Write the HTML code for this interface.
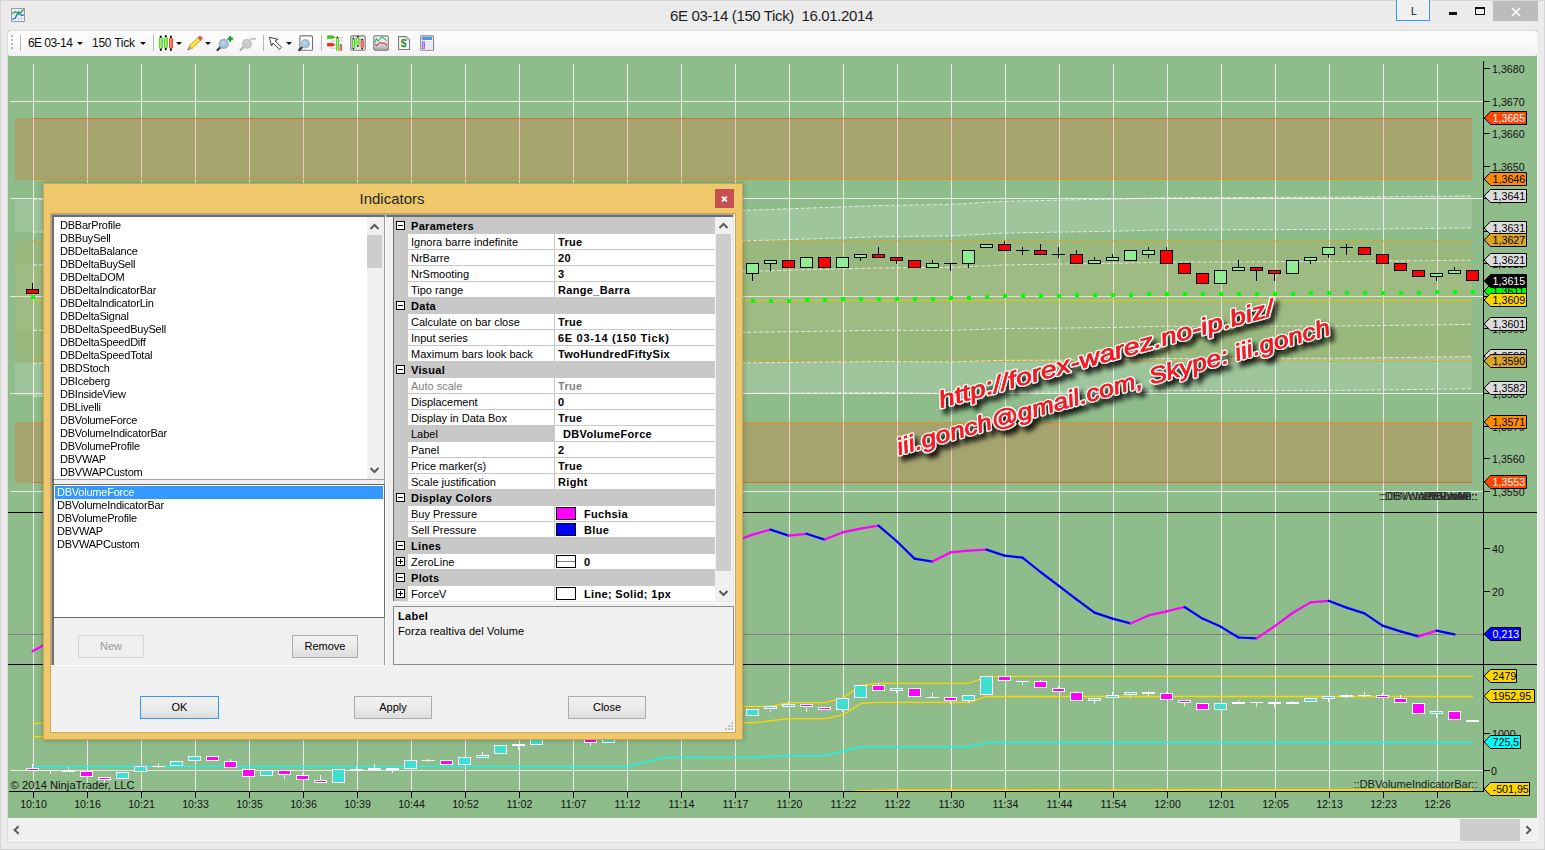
<!DOCTYPE html>
<html lang="en"><head><meta charset="utf-8"><title>6E 03-14 (150 Tick) 16.01.2014</title>
<style>
html,body{margin:0;padding:0}
body{width:1545px;height:850px;position:relative;overflow:hidden;background:#ebebeb;font-family:"Liberation Sans",Arial,sans-serif;font-size:11px;color:#000}
.abs{position:absolute}
#title{left:0;top:0;width:1545px;height:31px;background:#ebebeb}
#ttext{left:-1px;width:1545px;top:7px;text-align:center;font-size:15px;letter-spacing:-0.37px;color:#1e1e1e;line-height:18px;white-space:pre}
#tb{left:8px;top:31px;width:1528.5px;height:25px;background:linear-gradient(#fdfdfd,#fbfbfb 40%,#f1f1f1);border-radius:2px}
.tbt{top:36px;font-size:12px;line-height:14px;color:#111;letter-spacing:-0.2px}
.sep{top:35px;width:1px;height:16px;background:#b9b9b9}
.dd{width:0;height:0;border-left:3px solid transparent;border-right:3px solid transparent;border-top:3.5px solid #111;top:41.7px}
#sb{left:8px;top:818px;width:1529px;height:24px;background:#f0f0f0}
#dlg{left:43px;top:183px;width:700px;height:557px;background:#efc86b;box-sizing:border-box;border:1px solid #cfa650;box-shadow:0 0 5px rgba(0,0,0,0.3)}
#dtitle{left:-1px;top:6px;width:698px;text-align:center;font-size:15px;color:#262626;line-height:18px;letter-spacing:0}
#dclose{left:671px;top:5px;width:19px;height:19px;background:#c75050;color:#fff}
#client{left:7px;top:30px;width:684px;height:518px;background:#f0f0f0;outline:1px solid #cfa650;box-shadow:inset -1px -1px 0 #fbfbfb}
.lb{background:#fff;border:1px solid #828790;box-sizing:border-box;overflow:hidden}
.li{position:absolute;left:6px;height:13px;line-height:13px;white-space:pre;letter-spacing:-0.22px;font-size:11px;transform:scaleY(1.07);transform-origin:0 10px}
.btn{box-sizing:border-box;border:1px solid #acacac;background:linear-gradient(#f2f2f2,#ebebeb 50%,#dddddd);text-align:center;font-size:11px;line-height:21px;height:23px;font-size:11px}
.sbt{background:#f0f0f0}
.thumb{background:#cdcdcd}
.pg{left:386px;top:31px;width:341px;height:388px;background:#c8c8c8;border:1px solid #828790;box-sizing:border-box;overflow:hidden}
.row{position:absolute;left:0;width:321px;height:16px}
.cat{font-weight:bold;left:17px;top:0;line-height:16.5px;position:absolute;white-space:pre;letter-spacing:0.3px}
.lab{position:absolute;left:14px;top:0;width:146px;height:15px;background:#fff;line-height:16.5px;white-space:pre;text-indent:3px;letter-spacing:0}
.val{position:absolute;left:161px;top:0;width:160px;height:15px;background:#fff;line-height:16.5px;font-weight:bold;white-space:pre;text-indent:3px;letter-spacing:0.33px}
.box{position:absolute;left:2px;top:3px;width:7px;height:7px;border:1px solid #000;background:#fff}
.box i{position:absolute;left:1px;top:3px;width:5px;height:1px;background:#000}
.box b{position:absolute;left:3px;top:1px;width:1px;height:5px;background:#000}
.sw{position:absolute;left:1px;top:1px;width:18px;height:11px;border:1px solid #000}
</style></head><body>
<div id="title" class="abs"></div>
<div class="abs" style="left:0;top:0;width:1545px;height:1px;background:#d6d6d6"></div>
<div class="abs" style="left:0;top:0;width:1px;height:850px;background:#d6d6d6"></div>
<div class="abs" style="left:1544px;top:0;width:1px;height:850px;background:#d6d6d6"></div>
<div class="abs" style="left:0;top:849px;width:1545px;height:1px;background:#d0d0d0"></div>
<svg class="abs" style="left:11px;top:8px" width="14" height="14" viewBox="0 0 14 14"><rect x="0.5" y="0.5" width="13" height="13" fill="#f6f4fc" stroke="#9a9cb8" stroke-width="1"/><path d="M1 4h12M1 7.2h12M1 10.4h12M4 1v12M7.2 1v12M10.4 1v12" stroke="#cfcde6" stroke-width="0.7"/><polyline points="1.3,11.5 4.3,9.9 5.8,7 7.5,3.7 10.5,7.5 13.2,6.7" fill="none" stroke="#1460d8" stroke-width="1.15" stroke-linejoin="round"/><polyline points="1.1,5.7 4.6,3.6 7.5,6.6 12.8,1.5" fill="none" stroke="#22b014" stroke-width="1.15" stroke-linejoin="round"/></svg>
<div id="ttext" class="abs">6E 03-14 (150 Tick)  16.01.2014</div>
<div class="abs" style="left:1396px;top:0;width:34px;height:21px;box-sizing:border-box;border:1px solid #3b97ff;border-top:none;background:#f0f0f0;text-align:center;text-indent:2px;font-size:10.5px;line-height:22px;color:#111">L</div>
<div class="abs" style="left:1449px;top:12px;width:8px;height:3px;background:#111"></div>
<div class="abs" style="left:1475px;top:7px;width:10px;height:8px;box-sizing:border-box;border:1px solid #111;border-top-width:2px"></div>
<div class="abs" style="left:1493px;top:1px;width:45px;height:20px;background:#bcbcbc"></div>
<svg class="abs" style="left:1511px;top:7px" width="10" height="10" viewBox="0 0 10 10"><path d="M1 1l8 8M9 1l-8 8" stroke="#fff" stroke-width="1.6"/></svg>
<svg width="1545" height="850" viewBox="0 0 1545 850" style="position:absolute;left:0;top:0" font-family="'Liberation Sans', Arial, sans-serif" font-size="10.67px">
<defs><filter id="ws" x="-5%" y="-30%" width="110%" height="170%"><feGaussianBlur in="SourceAlpha" stdDeviation="2.4"/><feOffset dx="4" dy="5" result="b"/><feComponentTransfer><feFuncA type="linear" slope="0.85"/></feComponentTransfer><feMerge><feMergeNode/><feMergeNode in="SourceGraphic"/></feMerge></filter></defs>
<rect x="8" y="31" width="1529" height="787" fill="#8fbc8b"/>
<g stroke="#e9e9e4" stroke-width="1" shape-rendering="crispEdges">
<line x1="33.5" y1="64" x2="33.5" y2="791"/>
<line x1="87.5" y1="64" x2="87.5" y2="791"/>
<line x1="141.5" y1="64" x2="141.5" y2="791"/>
<line x1="195.5" y1="64" x2="195.5" y2="791"/>
<line x1="249.5" y1="64" x2="249.5" y2="791"/>
<line x1="303.5" y1="64" x2="303.5" y2="791"/>
<line x1="357.5" y1="64" x2="357.5" y2="791"/>
<line x1="411.5" y1="64" x2="411.5" y2="791"/>
<line x1="465.5" y1="64" x2="465.5" y2="791"/>
<line x1="519.5" y1="64" x2="519.5" y2="791"/>
<line x1="573.5" y1="64" x2="573.5" y2="791"/>
<line x1="627.5" y1="64" x2="627.5" y2="791"/>
<line x1="681.5" y1="64" x2="681.5" y2="791"/>
<line x1="735.5" y1="64" x2="735.5" y2="791"/>
<line x1="789.5" y1="64" x2="789.5" y2="791"/>
<line x1="843.5" y1="64" x2="843.5" y2="791"/>
<line x1="897.5" y1="64" x2="897.5" y2="791"/>
<line x1="951.5" y1="64" x2="951.5" y2="791"/>
<line x1="1005.5" y1="64" x2="1005.5" y2="791"/>
<line x1="1059.5" y1="64" x2="1059.5" y2="791"/>
<line x1="1113.5" y1="64" x2="1113.5" y2="791"/>
<line x1="1167.5" y1="64" x2="1167.5" y2="791"/>
<line x1="1221.5" y1="64" x2="1221.5" y2="791"/>
<line x1="1275.5" y1="64" x2="1275.5" y2="791"/>
<line x1="1329.5" y1="64" x2="1329.5" y2="791"/>
<line x1="1383.5" y1="64" x2="1383.5" y2="791"/>
<line x1="1437.5" y1="64" x2="1437.5" y2="791"/>
<line x1="10" y1="101.5" x2="1483" y2="101.5"/>
<line x1="10" y1="198.5" x2="1483" y2="198.5"/>
<line x1="10" y1="296.5" x2="1483" y2="296.5"/>
<line x1="10" y1="393.5" x2="1483" y2="393.5"/>
<line x1="10" y1="491.5" x2="1483" y2="491.5"/>
<line x1="10" y1="770.5" x2="1483" y2="770.5"/>
</g>
<rect x="15" y="118" width="1457" height="62" fill="#ff4500" fill-opacity="0.2"/>
<rect x="15" y="422" width="1457" height="61" fill="#ff4500" fill-opacity="0.2"/>
<rect x="15" y="240" width="1457" height="122" fill="#daa520" fill-opacity="0.13"/>
<polygon points="15.0,199.2 33.0,199.2 745.0,210.4 880.0,205.5 950.0,204.4 1005.0,201.3 1060.0,200.1 1120.0,199.0 1160.0,197.8 1340.0,197.2 1472.0,195.9 1472.0,228.0 1340.0,229.4 1160.0,229.9 1120.0,231.1 1060.0,232.1 1005.0,233.1 950.0,235.9 880.0,236.7 745.0,240.9 33.0,232.0 15.0,232.0" fill="rgba(255,255,255,0.14)"/>
<polygon points="15.0,363.2 33.0,363.2 745.0,362.9 880.0,361.5 950.0,361.9 1005.0,360.3 1060.0,360.1 1120.0,359.5 1160.0,358.5 1340.0,358.2 1472.0,356.6 1472.0,388.8 1340.0,390.4 1160.0,390.6 1120.0,391.6 1060.0,392.1 1005.0,392.1 950.0,393.4 880.0,392.7 745.0,393.4 33.0,396.0 15.0,396.0" fill="rgba(255,255,255,0.14)"/>
<polygon points="15.0,264.8 33.0,264.8 745.0,271.4 880.0,267.9 950.0,267.4 1005.0,264.9 1060.0,264.1 1120.0,263.2 1160.0,262.1 1340.0,261.6 1472.0,260.2 1472.0,324.4 1340.0,326.0 1160.0,326.3 1120.0,327.4 1060.0,328.1 1005.0,328.5 950.0,330.4 880.0,330.3 745.0,332.4 33.0,330.4 15.0,330.4" fill="rgba(255,255,255,0.05)"/>
<g stroke-width="1" shape-rendering="crispEdges">
<line x1="33" x2="1472" y1="118.5" y2="118.5" stroke="#ff4500" stroke-opacity="0.55"/>
<line x1="33" x2="1472" y1="179.5" y2="179.5" stroke="#ff8c00" stroke-opacity="0.7"/>
<line x1="33" x2="1472" y1="422.5" y2="422.5" stroke="#ff8c00" stroke-opacity="0.7"/>
<line x1="33" x2="1472" y1="482.5" y2="482.5" stroke="#ff4500" stroke-opacity="0.55"/>
<line x1="33" x2="1472" y1="240.5" y2="240.5" stroke="#daa520" stroke-opacity="0.75"/>
<line x1="33" x2="1472" y1="361.5" y2="361.5" stroke="#daa520" stroke-opacity="0.75"/>
<line x1="33" x2="1472" y1="300.5" y2="300.5" stroke="#e6d200" stroke-opacity="0.75"/>
</g>
<g fill="none" stroke="#f4f4f4" stroke-opacity="0.8" stroke-width="1" stroke-dasharray="4 2">
<polyline points="33.0,199.2 745.0,210.4 880.0,205.5 950.0,204.4 1005.0,201.3 1060.0,200.1 1120.0,199.0 1160.0,197.8 1340.0,197.2 1472.0,195.9"/>
<polyline points="33.0,232.0 745.0,240.9 880.0,236.7 950.0,235.9 1005.0,233.1 1060.0,232.1 1120.0,231.1 1160.0,229.9 1340.0,229.4 1472.0,228.0"/>
<polyline points="33.0,264.8 745.0,271.4 880.0,267.9 950.0,267.4 1005.0,264.9 1060.0,264.1 1120.0,263.2 1160.0,262.1 1340.0,261.6 1472.0,260.2"/>
<polyline points="33.0,330.4 745.0,332.4 880.0,330.3 950.0,330.4 1005.0,328.5 1060.0,328.1 1120.0,327.4 1160.0,326.3 1340.0,326.0 1472.0,324.4"/>
<polyline points="33.0,363.2 745.0,362.9 880.0,361.5 950.0,361.9 1005.0,360.3 1060.0,360.1 1120.0,359.5 1160.0,358.5 1340.0,358.2 1472.0,356.6"/>
<polyline points="33.0,396.0 745.0,393.4 880.0,392.7 950.0,393.4 1005.0,392.1 1060.0,392.1 1120.0,391.6 1160.0,390.6 1340.0,390.4 1472.0,388.8"/>
</g>
<g fill="#00ff00" shape-rendering="crispEdges">
<rect x="31" y="295" width="4" height="4"/>
<rect x="49" y="295" width="4" height="4"/>
<rect x="67" y="295" width="4" height="4"/>
<rect x="85" y="296" width="4" height="4"/>
<rect x="103" y="296" width="4" height="4"/>
<rect x="121" y="296" width="4" height="4"/>
<rect x="139" y="296" width="4" height="4"/>
<rect x="157" y="296" width="4" height="4"/>
<rect x="175" y="296" width="4" height="4"/>
<rect x="193" y="296" width="4" height="4"/>
<rect x="211" y="296" width="4" height="4"/>
<rect x="229" y="296" width="4" height="4"/>
<rect x="247" y="297" width="4" height="4"/>
<rect x="265" y="297" width="4" height="4"/>
<rect x="283" y="297" width="4" height="4"/>
<rect x="301" y="297" width="4" height="4"/>
<rect x="319" y="297" width="4" height="4"/>
<rect x="337" y="297" width="4" height="4"/>
<rect x="355" y="297" width="4" height="4"/>
<rect x="373" y="297" width="4" height="4"/>
<rect x="391" y="297" width="4" height="4"/>
<rect x="409" y="297" width="4" height="4"/>
<rect x="427" y="298" width="4" height="4"/>
<rect x="445" y="298" width="4" height="4"/>
<rect x="463" y="298" width="4" height="4"/>
<rect x="481" y="298" width="4" height="4"/>
<rect x="499" y="298" width="4" height="4"/>
<rect x="517" y="298" width="4" height="4"/>
<rect x="535" y="298" width="4" height="4"/>
<rect x="553" y="298" width="4" height="4"/>
<rect x="571" y="298" width="4" height="4"/>
<rect x="589" y="299" width="4" height="4"/>
<rect x="607" y="299" width="4" height="4"/>
<rect x="625" y="299" width="4" height="4"/>
<rect x="643" y="299" width="4" height="4"/>
<rect x="661" y="299" width="4" height="4"/>
<rect x="679" y="299" width="4" height="4"/>
<rect x="697" y="299" width="4" height="4"/>
<rect x="715" y="299" width="4" height="4"/>
<rect x="733" y="299" width="4" height="4"/>
<rect x="751" y="299" width="4" height="4"/>
<rect x="769" y="299" width="4" height="4"/>
<rect x="787" y="299" width="4" height="4"/>
<rect x="805" y="298" width="4" height="4"/>
<rect x="823" y="298" width="4" height="4"/>
<rect x="841" y="297" width="4" height="4"/>
<rect x="859" y="297" width="4" height="4"/>
<rect x="877" y="297" width="4" height="4"/>
<rect x="895" y="297" width="4" height="4"/>
<rect x="913" y="297" width="4" height="4"/>
<rect x="931" y="297" width="4" height="4"/>
<rect x="949" y="296" width="4" height="4"/>
<rect x="967" y="296" width="4" height="4"/>
<rect x="985" y="295" width="4" height="4"/>
<rect x="1003" y="294" width="4" height="4"/>
<rect x="1021" y="294" width="4" height="4"/>
<rect x="1039" y="294" width="4" height="4"/>
<rect x="1057" y="294" width="4" height="4"/>
<rect x="1075" y="293" width="4" height="4"/>
<rect x="1093" y="293" width="4" height="4"/>
<rect x="1111" y="293" width="4" height="4"/>
<rect x="1129" y="293" width="4" height="4"/>
<rect x="1147" y="292" width="4" height="4"/>
<rect x="1165" y="292" width="4" height="4"/>
<rect x="1183" y="292" width="4" height="4"/>
<rect x="1201" y="292" width="4" height="4"/>
<rect x="1219" y="292" width="4" height="4"/>
<rect x="1237" y="292" width="4" height="4"/>
<rect x="1255" y="292" width="4" height="4"/>
<rect x="1273" y="292" width="4" height="4"/>
<rect x="1291" y="292" width="4" height="4"/>
<rect x="1309" y="291" width="4" height="4"/>
<rect x="1327" y="291" width="4" height="4"/>
<rect x="1345" y="291" width="4" height="4"/>
<rect x="1363" y="291" width="4" height="4"/>
<rect x="1381" y="291" width="4" height="4"/>
<rect x="1399" y="291" width="4" height="4"/>
<rect x="1417" y="291" width="4" height="4"/>
<rect x="1435" y="290" width="4" height="4"/>
<rect x="1453" y="290" width="4" height="4"/>
<rect x="1471" y="290" width="4" height="4"/>
</g>
<g stroke="#000" stroke-width="1" shape-rendering="crispEdges">
<line x1="32.5" x2="32.5" y1="283.0" y2="289.5"/>
<rect x="26.5" y="289.5" width="12" height="4.0" fill="#ff0000"/>
<line x1="752.5" x2="752.5" y1="273.5" y2="281.0"/>
<rect x="746.5" y="263.5" width="12" height="10.0" fill="#90ee90"/>
<line x1="770.5" x2="770.5" y1="263.5" y2="271.0"/>
<rect x="764.5" y="260.5" width="12" height="3.0" fill="#90ee90"/>
<rect x="782.5" y="260.5" width="12" height="7.0" fill="#ff0000"/>
<rect x="800.5" y="257.5" width="12" height="10.0" fill="#90ee90"/>
<rect x="818.5" y="257.5" width="12" height="10.0" fill="#ff0000"/>
<rect x="836.5" y="257.5" width="12" height="10.0" fill="#90ee90"/>
<line x1="860.5" x2="860.5" y1="257.5" y2="261.0"/>
<rect x="854.5" y="254.5" width="12" height="3.0" fill="#90ee90"/>
<line x1="878.5" x2="878.5" y1="247.0" y2="254.5"/>
<rect x="872.5" y="254.5" width="12" height="3.0" fill="#ff0000"/>
<line x1="896.5" x2="896.5" y1="260.5" y2="264.0"/>
<rect x="890.5" y="257.5" width="12" height="3.0" fill="#ff0000"/>
<rect x="908.5" y="260.5" width="12" height="7.0" fill="#ff0000"/>
<line x1="932.5" x2="932.5" y1="260.0" y2="263.5"/>
<rect x="926.5" y="263.5" width="12" height="4.0" fill="#90ee90"/>
<line x1="950.5" x2="950.5" y1="263.5" y2="271.0"/>
<line x1="944.0" x2="957.0" y1="263.5" y2="263.5"/>
<line x1="968.5" x2="968.5" y1="263.5" y2="268.0"/>
<rect x="962.5" y="250.5" width="12" height="13.0" fill="#90ee90"/>
<rect x="980.5" y="244.5" width="12" height="3.0" fill="#90ee90"/>
<line x1="1004.5" x2="1004.5" y1="241.0" y2="244.5"/>
<rect x="998.5" y="244.5" width="12" height="6.0" fill="#ff0000"/>
<line x1="1022.5" x2="1022.5" y1="247.0" y2="250.5"/>
<line x1="1022.5" x2="1022.5" y1="250.5" y2="255.0"/>
<line x1="1016.0" x2="1029.0" y1="250.5" y2="250.5"/>
<line x1="1040.5" x2="1040.5" y1="244.0" y2="250.5"/>
<rect x="1034.5" y="250.5" width="12" height="4.0" fill="#ff0000"/>
<line x1="1058.5" x2="1058.5" y1="247.0" y2="254.5"/>
<line x1="1058.5" x2="1058.5" y1="254.5" y2="258.0"/>
<line x1="1052.0" x2="1065.0" y1="254.5" y2="254.5"/>
<line x1="1076.5" x2="1076.5" y1="250.0" y2="254.5"/>
<rect x="1070.5" y="254.5" width="12" height="9.0" fill="#ff0000"/>
<line x1="1094.5" x2="1094.5" y1="257.0" y2="260.5"/>
<rect x="1088.5" y="260.5" width="12" height="3.0" fill="#90ee90"/>
<line x1="1112.5" x2="1112.5" y1="254.0" y2="257.5"/>
<rect x="1106.5" y="257.5" width="12" height="3.0" fill="#90ee90"/>
<rect x="1124.5" y="250.5" width="12" height="10.0" fill="#90ee90"/>
<line x1="1148.5" x2="1148.5" y1="247.0" y2="250.5"/>
<line x1="1148.5" x2="1148.5" y1="254.5" y2="258.0"/>
<rect x="1142.5" y="250.5" width="12" height="4.0" fill="#90ee90"/>
<line x1="1166.5" x2="1166.5" y1="247.0" y2="250.5"/>
<rect x="1160.5" y="250.5" width="12" height="13.0" fill="#ff0000"/>
<rect x="1178.5" y="263.5" width="12" height="10.0" fill="#ff0000"/>
<rect x="1196.5" y="273.5" width="12" height="10.0" fill="#ff0000"/>
<rect x="1214.5" y="270.5" width="12" height="13.0" fill="#90ee90"/>
<line x1="1238.5" x2="1238.5" y1="260.0" y2="267.5"/>
<rect x="1232.5" y="267.5" width="12" height="3.0" fill="#90ee90"/>
<line x1="1256.5" x2="1256.5" y1="270.5" y2="281.0"/>
<rect x="1250.5" y="267.5" width="12" height="3.0" fill="#ff0000"/>
<line x1="1274.5" x2="1274.5" y1="273.5" y2="281.0"/>
<rect x="1268.5" y="270.5" width="12" height="3.0" fill="#ff0000"/>
<rect x="1286.5" y="260.5" width="12" height="13.0" fill="#90ee90"/>
<line x1="1310.5" x2="1310.5" y1="260.5" y2="264.0"/>
<rect x="1304.5" y="257.5" width="12" height="3.0" fill="#90ee90"/>
<line x1="1328.5" x2="1328.5" y1="254.5" y2="258.0"/>
<rect x="1322.5" y="247.5" width="12" height="7.0" fill="#90ee90"/>
<line x1="1346.5" x2="1346.5" y1="244.0" y2="247.5"/>
<line x1="1346.5" x2="1346.5" y1="247.5" y2="255.0"/>
<line x1="1340.0" x2="1353.0" y1="247.5" y2="247.5"/>
<rect x="1358.5" y="247.5" width="12" height="7.0" fill="#ff0000"/>
<rect x="1376.5" y="254.5" width="12" height="9.0" fill="#ff0000"/>
<rect x="1394.5" y="263.5" width="12" height="7.0" fill="#ff0000"/>
<rect x="1412.5" y="270.5" width="12" height="6.0" fill="#ff0000"/>
<line x1="1436.5" x2="1436.5" y1="276.5" y2="281.0"/>
<rect x="1430.5" y="273.5" width="12" height="3.0" fill="#90ee90"/>
<line x1="1454.5" x2="1454.5" y1="267.0" y2="270.5"/>
<rect x="1448.5" y="270.5" width="12" height="3.0" fill="#90ee90"/>
<rect x="1466.5" y="270.5" width="12" height="10.0" fill="#ff0000"/>
</g>
<g fill="#2a2a2a" text-anchor="end" font-size="11.2px">
<text x="1477.5" y="499.5">::DBVolumeProfile::</text>
<text x="1477.5" y="499.5">::DBVWAP::</text>
<text x="1477.5" y="499.5">::DBVWAPCustom::</text>
<text x="1477.5" y="499.5">::DBLivelli::</text>
</g>
<g filter="url(#ws)" font-family="'Liberation Sans', sans-serif" font-style="italic" font-size="23px" stroke-linejoin="round">
<text transform="translate(941,408) rotate(-15.6)" textLength="347" lengthAdjust="spacingAndGlyphs" fill="#fff" stroke="#fff" stroke-width="3.1">http://forex-warez.no-ip.biz/</text>
<text transform="translate(941,408) rotate(-15.6)" textLength="347" lengthAdjust="spacingAndGlyphs" fill="#ee1c24" stroke="#ee1c24" stroke-width="0.8">http://forex-warez.no-ip.biz/</text>
<text transform="translate(899,455) rotate(-15.6)" textLength="449" lengthAdjust="spacingAndGlyphs" fill="#fff" stroke="#fff" stroke-width="3.1">iii.gonch@gmail.com, Skype: iii.gonch</text>
<text transform="translate(899,455) rotate(-15.6)" textLength="449" lengthAdjust="spacingAndGlyphs" fill="#ee1c24" stroke="#ee1c24" stroke-width="0.8">iii.gonch@gmail.com, Skype: iii.gonch</text>
</g>
<line x1="8" x2="1483" y1="634.5" y2="634.5" stroke="#808080" stroke-width="1" shape-rendering="crispEdges"/>
<line x1="32.5" y1="651.3" x2="50.5" y2="641.5" stroke="#ff00ff" stroke-width="2.2" stroke-linecap="round"/>
<line x1="734.5" y1="541.5" x2="752.5" y2="534.6" stroke="#ff00ff" stroke-width="2.2" stroke-linecap="round"/>
<line x1="752.5" y1="534.6" x2="770.5" y2="529.6" stroke="#ff00ff" stroke-width="2.2" stroke-linecap="round"/>
<line x1="770.5" y1="529.6" x2="788.5" y2="535.6" stroke="#0000ff" stroke-width="2.2" stroke-linecap="round"/>
<line x1="788.5" y1="535.6" x2="806.5" y2="533.8" stroke="#ff00ff" stroke-width="2.2" stroke-linecap="round"/>
<line x1="806.5" y1="533.8" x2="824.5" y2="539.6" stroke="#0000ff" stroke-width="2.2" stroke-linecap="round"/>
<line x1="824.5" y1="539.6" x2="842.5" y2="532.4" stroke="#ff00ff" stroke-width="2.2" stroke-linecap="round"/>
<line x1="842.5" y1="532.4" x2="860.5" y2="528.6" stroke="#ff00ff" stroke-width="2.2" stroke-linecap="round"/>
<line x1="860.5" y1="528.6" x2="878.5" y2="525.6" stroke="#ff00ff" stroke-width="2.2" stroke-linecap="round"/>
<line x1="878.5" y1="525.6" x2="896.5" y2="541.0" stroke="#0000ff" stroke-width="2.2" stroke-linecap="round"/>
<line x1="896.5" y1="541.0" x2="914.5" y2="558.6" stroke="#0000ff" stroke-width="2.2" stroke-linecap="round"/>
<line x1="914.5" y1="558.6" x2="932.5" y2="561.6" stroke="#0000ff" stroke-width="2.2" stroke-linecap="round"/>
<line x1="932.5" y1="561.6" x2="950.5" y2="552.4" stroke="#ff00ff" stroke-width="2.2" stroke-linecap="round"/>
<line x1="950.5" y1="552.4" x2="968.5" y2="550.6" stroke="#ff00ff" stroke-width="2.2" stroke-linecap="round"/>
<line x1="968.5" y1="550.6" x2="986.5" y2="549.6" stroke="#ff00ff" stroke-width="2.2" stroke-linecap="round"/>
<line x1="986.5" y1="549.6" x2="1004.5" y2="555.6" stroke="#0000ff" stroke-width="2.2" stroke-linecap="round"/>
<line x1="1004.5" y1="555.6" x2="1022.5" y2="557.6" stroke="#0000ff" stroke-width="2.2" stroke-linecap="round"/>
<line x1="1022.5" y1="557.6" x2="1040.5" y2="572.0" stroke="#0000ff" stroke-width="2.2" stroke-linecap="round"/>
<line x1="1040.5" y1="572.0" x2="1058.5" y2="585.6" stroke="#0000ff" stroke-width="2.2" stroke-linecap="round"/>
<line x1="1058.5" y1="585.6" x2="1076.5" y2="599.4" stroke="#0000ff" stroke-width="2.2" stroke-linecap="round"/>
<line x1="1076.5" y1="599.4" x2="1094.5" y2="612.6" stroke="#0000ff" stroke-width="2.2" stroke-linecap="round"/>
<line x1="1094.5" y1="612.6" x2="1112.5" y2="618.6" stroke="#0000ff" stroke-width="2.2" stroke-linecap="round"/>
<line x1="1112.5" y1="618.6" x2="1130.5" y2="623.4" stroke="#0000ff" stroke-width="2.2" stroke-linecap="round"/>
<line x1="1130.5" y1="623.4" x2="1148.5" y2="615.4" stroke="#ff00ff" stroke-width="2.2" stroke-linecap="round"/>
<line x1="1148.5" y1="615.4" x2="1166.5" y2="611.4" stroke="#ff00ff" stroke-width="2.2" stroke-linecap="round"/>
<line x1="1166.5" y1="611.4" x2="1184.5" y2="607.0" stroke="#ff00ff" stroke-width="2.2" stroke-linecap="round"/>
<line x1="1184.5" y1="607.0" x2="1202.5" y2="618.6" stroke="#0000ff" stroke-width="2.2" stroke-linecap="round"/>
<line x1="1202.5" y1="618.6" x2="1220.5" y2="626.6" stroke="#0000ff" stroke-width="2.2" stroke-linecap="round"/>
<line x1="1220.5" y1="626.6" x2="1238.5" y2="637.5" stroke="#0000ff" stroke-width="2.2" stroke-linecap="round"/>
<line x1="1238.5" y1="637.5" x2="1256.5" y2="638.4" stroke="#0000ff" stroke-width="2.2" stroke-linecap="round"/>
<line x1="1256.5" y1="638.4" x2="1274.5" y2="626.4" stroke="#ff00ff" stroke-width="2.2" stroke-linecap="round"/>
<line x1="1274.5" y1="626.4" x2="1292.5" y2="613.0" stroke="#ff00ff" stroke-width="2.2" stroke-linecap="round"/>
<line x1="1292.5" y1="613.0" x2="1310.5" y2="602.4" stroke="#ff00ff" stroke-width="2.2" stroke-linecap="round"/>
<line x1="1310.5" y1="602.4" x2="1328.5" y2="600.8" stroke="#ff00ff" stroke-width="2.2" stroke-linecap="round"/>
<line x1="1328.5" y1="600.8" x2="1346.5" y2="607.6" stroke="#0000ff" stroke-width="2.2" stroke-linecap="round"/>
<line x1="1346.5" y1="607.6" x2="1364.5" y2="613.4" stroke="#0000ff" stroke-width="2.2" stroke-linecap="round"/>
<line x1="1364.5" y1="613.4" x2="1382.5" y2="625.6" stroke="#0000ff" stroke-width="2.2" stroke-linecap="round"/>
<line x1="1382.5" y1="625.6" x2="1400.5" y2="631.4" stroke="#0000ff" stroke-width="2.2" stroke-linecap="round"/>
<line x1="1400.5" y1="631.4" x2="1418.5" y2="636.4" stroke="#0000ff" stroke-width="2.2" stroke-linecap="round"/>
<line x1="1418.5" y1="636.4" x2="1436.5" y2="630.6" stroke="#ff00ff" stroke-width="2.2" stroke-linecap="round"/>
<line x1="1436.5" y1="630.6" x2="1454.5" y2="634.4" stroke="#0000ff" stroke-width="2.2" stroke-linecap="round"/>
<g fill="none" stroke-width="1.3">
<polyline points="33.0,723.3 44.0,723.3 735.0,706.4 771.0,706.4 789.0,702.6 825.0,702.6 843.0,698.0 861.0,685.4 879.0,683.4 969.0,683.4 987.0,676.4 1473.0,676.4" stroke="#ffd700"/>
<polyline points="33.0,736.5 44.0,736.5 735.0,722.6 755.0,722.6 789.0,718.6 825.0,718.6 843.0,715.0 861.0,703.4 879.0,702.4 969.0,702.4 987.0,696.5 1473.0,696.5" stroke="#ffd700"/>
<polyline points="33.0,766.3 627.0,766.4 663.0,757.6 753.0,757.4 789.0,755.6 825.0,755.6 861.0,746.6 969.0,746.6 987.0,742.4 1473.0,742.4" stroke="#00ffff"/>
<polyline points="854,791 900,790.3 1473,790" stroke="#ffd700" stroke-width="2"/>
</g>
<g stroke="#fff" stroke-width="1" shape-rendering="crispEdges">
<line x1="32.5" x2="32.5" y1="764.0" y2="768.0"/>
<rect x="26.5" y="768.5" width="12" height="2" fill="#ff00ff"/>
<line x1="50.5" x2="50.5" y1="771.0" y2="774.0"/>
<rect x="44.0" y="770" width="13" height="1" fill="#fff" stroke="none"/>
<line x1="68.5" x2="68.5" y1="767.0" y2="770.0"/>
<rect x="62.0" y="770" width="13" height="2" fill="#fff" stroke="none"/>
<rect x="80.5" y="771.5" width="12" height="5" fill="#ff00ff"/>
<line x1="104.5" x2="104.5" y1="780.0" y2="782.0"/>
<rect x="98.5" y="777.5" width="12" height="2" fill="#ff00ff"/>
<rect x="116.5" y="772.5" width="12" height="6" fill="#40e0d0"/>
<rect x="134.5" y="766.5" width="12" height="5" fill="#40e0d0"/>
<line x1="158.5" x2="158.5" y1="763.0" y2="766.0"/>
<line x1="158.5" x2="158.5" y1="767.0" y2="768.0"/>
<rect x="152.0" y="766" width="13" height="1" fill="#fff" stroke="none"/>
<rect x="170.5" y="761.5" width="12" height="4" fill="#40e0d0"/>
<rect x="188.5" y="756.5" width="12" height="4" fill="#40e0d0"/>
<rect x="206.5" y="756.5" width="12" height="4" fill="#ff00ff"/>
<line x1="230.5" x2="230.5" y1="759.0" y2="762.0"/>
<rect x="224.5" y="761.5" width="12" height="6" fill="#ff00ff"/>
<rect x="242.5" y="769.5" width="12" height="7" fill="#ff00ff"/>
<rect x="260.5" y="770.5" width="12" height="5" fill="#40e0d0"/>
<line x1="284.5" x2="284.5" y1="775.0" y2="779.0"/>
<rect x="278.5" y="770.5" width="12" height="4" fill="#ff00ff"/>
<line x1="302.5" x2="302.5" y1="773.0" y2="775.0"/>
<rect x="296.5" y="775.5" width="12" height="4" fill="#ff00ff"/>
<line x1="320.5" x2="320.5" y1="775.0" y2="780.0"/>
<rect x="314.5" y="780.5" width="12" height="2" fill="#ff00ff"/>
<rect x="332.5" y="769.5" width="12" height="13" fill="#40e0d0"/>
<line x1="356.5" x2="356.5" y1="766.0" y2="769.0"/>
<rect x="350.0" y="769" width="13" height="2" fill="#fff" stroke="none"/>
<line x1="374.5" x2="374.5" y1="764.0" y2="768.0"/>
<rect x="368.0" y="768" width="13" height="2" fill="#fff" stroke="none"/>
<line x1="392.5" x2="392.5" y1="770.0" y2="773.0"/>
<rect x="386.0" y="768" width="13" height="2" fill="#fff" stroke="none"/>
<rect x="404.5" y="760.5" width="12" height="8" fill="#40e0d0"/>
<line x1="428.5" x2="428.5" y1="759.0" y2="760.0"/>
<line x1="428.5" x2="428.5" y1="761.0" y2="762.0"/>
<rect x="422.0" y="760" width="13" height="1" fill="#fff" stroke="none"/>
<line x1="446.5" x2="446.5" y1="760.0" y2="761.0"/>
<rect x="440.5" y="760.5" width="12" height="4" fill="#ff00ff"/>
<rect x="458.5" y="757.5" width="12" height="7" fill="#40e0d0"/>
<line x1="482.5" x2="482.5" y1="752.0" y2="755.0"/>
<rect x="476.5" y="755.5" width="12" height="2" fill="#40e0d0"/>
<rect x="494.5" y="745.5" width="12" height="8" fill="#40e0d0"/>
<line x1="518.5" x2="518.5" y1="746.0" y2="750.0"/>
<rect x="512.0" y="744" width="13" height="2" fill="#fff" stroke="none"/>
<rect x="530.5" y="735.5" width="12" height="9" fill="#40e0d0"/>
<line x1="590.5" x2="590.5" y1="742.0" y2="746.0"/>
<rect x="584.5" y="737.5" width="12" height="5" fill="#ff00ff"/>
<rect x="602.5" y="735.5" width="12" height="7" fill="#40e0d0"/>
<rect x="746.5" y="709.5" width="12" height="6" fill="#40e0d0"/>
<line x1="770.5" x2="770.5" y1="710.0" y2="712.0"/>
<rect x="764.5" y="706.5" width="12" height="2" fill="#40e0d0"/>
<line x1="788.5" x2="788.5" y1="702.0" y2="704.0"/>
<rect x="782.5" y="704.5" width="12" height="2" fill="#40e0d0"/>
<line x1="806.5" x2="806.5" y1="708.0" y2="712.0"/>
<rect x="800.5" y="704.5" width="12" height="2" fill="#ff00ff"/>
<rect x="818.5" y="707.5" width="12" height="2" fill="#ff00ff"/>
<line x1="842.5" x2="842.5" y1="710.0" y2="712.0"/>
<rect x="836.5" y="698.5" width="12" height="11" fill="#40e0d0"/>
<rect x="854.5" y="685.5" width="12" height="12" fill="#40e0d0"/>
<line x1="878.5" x2="878.5" y1="683.0" y2="685.0"/>
<rect x="872.5" y="685.5" width="12" height="5" fill="#ff00ff"/>
<line x1="896.5" x2="896.5" y1="691.0" y2="693.0"/>
<rect x="890.5" y="688.5" width="12" height="2" fill="#40e0d0"/>
<rect x="908.5" y="688.5" width="12" height="8" fill="#ff00ff"/>
<line x1="932.5" x2="932.5" y1="693.0" y2="697.0"/>
<rect x="926.0" y="697" width="13" height="1" fill="#fff" stroke="none"/>
<line x1="950.5" x2="950.5" y1="701.0" y2="704.0"/>
<rect x="944.5" y="697.5" width="12" height="3" fill="#ff00ff"/>
<line x1="968.5" x2="968.5" y1="701.0" y2="703.0"/>
<rect x="962.5" y="695.5" width="12" height="5" fill="#40e0d0"/>
<rect x="980.5" y="676.5" width="12" height="18" fill="#40e0d0"/>
<rect x="998.5" y="676.5" width="12" height="4" fill="#ff00ff"/>
<line x1="1022.5" x2="1022.5" y1="681.0" y2="685.0"/>
<rect x="1016.0" y="681" width="13" height="1" fill="#fff" stroke="none"/>
<line x1="1040.5" x2="1040.5" y1="680.0" y2="681.0"/>
<rect x="1034.5" y="681.5" width="12" height="6" fill="#ff00ff"/>
<line x1="1058.5" x2="1058.5" y1="686.0" y2="688.0"/>
<rect x="1052.5" y="688.5" width="12" height="3" fill="#ff00ff"/>
<line x1="1076.5" x2="1076.5" y1="691.0" y2="692.0"/>
<rect x="1070.5" y="692.5" width="12" height="8" fill="#ff00ff"/>
<line x1="1094.5" x2="1094.5" y1="701.0" y2="704.0"/>
<rect x="1088.5" y="698.5" width="12" height="2" fill="#40e0d0"/>
<line x1="1112.5" x2="1112.5" y1="692.0" y2="695.0"/>
<rect x="1106.5" y="695.5" width="12" height="2" fill="#40e0d0"/>
<line x1="1130.5" x2="1130.5" y1="695.0" y2="698.0"/>
<rect x="1124.5" y="692.5" width="12" height="2" fill="#40e0d0"/>
<line x1="1148.5" x2="1148.5" y1="691.0" y2="692.0"/>
<line x1="1148.5" x2="1148.5" y1="694.0" y2="696.0"/>
<rect x="1142.0" y="692" width="13" height="2" fill="#fff" stroke="none"/>
<line x1="1166.5" x2="1166.5" y1="692.0" y2="693.0"/>
<rect x="1160.5" y="693.5" width="12" height="6" fill="#ff00ff"/>
<line x1="1184.5" x2="1184.5" y1="703.0" y2="706.0"/>
<rect x="1178.5" y="700.5" width="12" height="2" fill="#ff00ff"/>
<rect x="1196.5" y="703.5" width="12" height="6" fill="#ff00ff"/>
<rect x="1214.5" y="703.5" width="12" height="6" fill="#40e0d0"/>
<line x1="1238.5" x2="1238.5" y1="700.0" y2="702.0"/>
<rect x="1232.0" y="702" width="13" height="2" fill="#fff" stroke="none"/>
<line x1="1256.5" x2="1256.5" y1="703.0" y2="707.0"/>
<rect x="1250.0" y="702" width="13" height="1" fill="#fff" stroke="none"/>
<line x1="1274.5" x2="1274.5" y1="704.0" y2="707.0"/>
<rect x="1268.0" y="702" width="13" height="2" fill="#fff" stroke="none"/>
<line x1="1292.5" x2="1292.5" y1="701.0" y2="702.0"/>
<rect x="1286.0" y="702" width="13" height="2" fill="#fff" stroke="none"/>
<rect x="1304.5" y="698.5" width="12" height="3" fill="#40e0d0"/>
<line x1="1328.5" x2="1328.5" y1="698.0" y2="702.0"/>
<rect x="1322.5" y="696.5" width="12" height="2" fill="#40e0d0"/>
<line x1="1346.5" x2="1346.5" y1="694.0" y2="695.0"/>
<line x1="1346.5" x2="1346.5" y1="697.0" y2="698.0"/>
<rect x="1340.0" y="695" width="13" height="2" fill="#fff" stroke="none"/>
<line x1="1364.5" x2="1364.5" y1="692.0" y2="695.0"/>
<line x1="1364.5" x2="1364.5" y1="696.0" y2="697.0"/>
<rect x="1358.0" y="695" width="13" height="1" fill="#fff" stroke="none"/>
<line x1="1382.5" x2="1382.5" y1="693.0" y2="695.0"/>
<rect x="1376.5" y="695.5" width="12" height="2" fill="#ff00ff"/>
<line x1="1400.5" x2="1400.5" y1="695.0" y2="698.0"/>
<rect x="1394.5" y="698.5" width="12" height="4" fill="#ff00ff"/>
<rect x="1412.5" y="703.5" width="12" height="10" fill="#ff00ff"/>
<line x1="1436.5" x2="1436.5" y1="714.0" y2="718.0"/>
<rect x="1430.5" y="711.5" width="12" height="2" fill="#40e0d0"/>
<rect x="1448.5" y="711.5" width="12" height="8" fill="#ff00ff"/>
<rect x="1466.0" y="720" width="13" height="2" fill="#fff" stroke="none"/>
</g>
<g stroke="#000" stroke-width="1" shape-rendering="crispEdges">
<line x1="8" x2="1537" y1="512.5" y2="512.5"/>
<line x1="8" x2="1537" y1="664.5" y2="664.5"/>
<line x1="9" x2="1484" y1="791.5" y2="791.5"/>
<line x1="1483.5" x2="1483.5" y1="61" y2="792"/>
<line x1="33.5" x2="33.5" y1="792" y2="798"/>
<line x1="87.5" x2="87.5" y1="792" y2="798"/>
<line x1="141.5" x2="141.5" y1="792" y2="798"/>
<line x1="195.5" x2="195.5" y1="792" y2="798"/>
<line x1="249.5" x2="249.5" y1="792" y2="798"/>
<line x1="303.5" x2="303.5" y1="792" y2="798"/>
<line x1="357.5" x2="357.5" y1="792" y2="798"/>
<line x1="411.5" x2="411.5" y1="792" y2="798"/>
<line x1="465.5" x2="465.5" y1="792" y2="798"/>
<line x1="519.5" x2="519.5" y1="792" y2="798"/>
<line x1="573.5" x2="573.5" y1="792" y2="798"/>
<line x1="627.5" x2="627.5" y1="792" y2="798"/>
<line x1="681.5" x2="681.5" y1="792" y2="798"/>
<line x1="735.5" x2="735.5" y1="792" y2="798"/>
<line x1="789.5" x2="789.5" y1="792" y2="798"/>
<line x1="843.5" x2="843.5" y1="792" y2="798"/>
<line x1="897.5" x2="897.5" y1="792" y2="798"/>
<line x1="951.5" x2="951.5" y1="792" y2="798"/>
<line x1="1005.5" x2="1005.5" y1="792" y2="798"/>
<line x1="1059.5" x2="1059.5" y1="792" y2="798"/>
<line x1="1113.5" x2="1113.5" y1="792" y2="798"/>
<line x1="1167.5" x2="1167.5" y1="792" y2="798"/>
<line x1="1221.5" x2="1221.5" y1="792" y2="798"/>
<line x1="1275.5" x2="1275.5" y1="792" y2="798"/>
<line x1="1329.5" x2="1329.5" y1="792" y2="798"/>
<line x1="1383.5" x2="1383.5" y1="792" y2="798"/>
<line x1="1437.5" x2="1437.5" y1="792" y2="798"/>
<line x1="1484" x2="1490" y1="68.5" y2="68.5"/>
<line x1="1484" x2="1490" y1="101.5" y2="101.5"/>
<line x1="1484" x2="1490" y1="133.5" y2="133.5"/>
<line x1="1484" x2="1490" y1="166.5" y2="166.5"/>
<line x1="1484" x2="1490" y1="198.5" y2="198.5"/>
<line x1="1484" x2="1490" y1="231.5" y2="231.5"/>
<line x1="1484" x2="1490" y1="263.5" y2="263.5"/>
<line x1="1484" x2="1490" y1="296.5" y2="296.5"/>
<line x1="1484" x2="1490" y1="328.5" y2="328.5"/>
<line x1="1484" x2="1490" y1="361.5" y2="361.5"/>
<line x1="1484" x2="1490" y1="393.5" y2="393.5"/>
<line x1="1484" x2="1490" y1="426.5" y2="426.5"/>
<line x1="1484" x2="1490" y1="458.5" y2="458.5"/>
<line x1="1484" x2="1490" y1="491.5" y2="491.5"/>
<line x1="1484" x2="1490" y1="548.5" y2="548.5"/>
<line x1="1484" x2="1490" y1="591.5" y2="591.5"/>
<line x1="1484" x2="1490" y1="634.5" y2="634.5"/>
<line x1="1484" x2="1490" y1="733.5" y2="733.5"/>
<line x1="1484" x2="1490" y1="770.5" y2="770.5"/>
</g>
<g fill="#111">
<text x="1492" y="73.0">1,3680</text>
<text x="1492" y="106.0">1,3670</text>
<text x="1492" y="138.0">1,3660</text>
<text x="1492" y="171.0">1,3650</text>
<text x="1492" y="203.0">1,3640</text>
<text x="1492" y="236.0">1,3630</text>
<text x="1492" y="268.0">1,3620</text>
<text x="1492" y="301.0">1,3610</text>
<text x="1492" y="333.0">1,3600</text>
<text x="1492" y="366.0">1,3590</text>
<text x="1492" y="398.0">1,3580</text>
<text x="1492" y="431.0">1,3570</text>
<text x="1492" y="463.0">1,3560</text>
<text x="1492" y="496.0">1,3550</text>
<text x="1492" y="553">40</text><text x="1492" y="596">20</text>
<text x="1492" y="738">1000</text><text x="1491" y="775">0</text>
<text x="33.5" y="808" text-anchor="middle">10:10</text>
<text x="87.5" y="808" text-anchor="middle">10:16</text>
<text x="141.5" y="808" text-anchor="middle">10:21</text>
<text x="195.5" y="808" text-anchor="middle">10:33</text>
<text x="249.5" y="808" text-anchor="middle">10:35</text>
<text x="303.5" y="808" text-anchor="middle">10:36</text>
<text x="357.5" y="808" text-anchor="middle">10:39</text>
<text x="411.5" y="808" text-anchor="middle">10:44</text>
<text x="465.5" y="808" text-anchor="middle">10:52</text>
<text x="519.5" y="808" text-anchor="middle">11:02</text>
<text x="573.5" y="808" text-anchor="middle">11:07</text>
<text x="627.5" y="808" text-anchor="middle">11:12</text>
<text x="681.5" y="808" text-anchor="middle">11:14</text>
<text x="735.5" y="808" text-anchor="middle">11:17</text>
<text x="789.5" y="808" text-anchor="middle">11:20</text>
<text x="843.5" y="808" text-anchor="middle">11:22</text>
<text x="897.5" y="808" text-anchor="middle">11:22</text>
<text x="951.5" y="808" text-anchor="middle">11:30</text>
<text x="1005.5" y="808" text-anchor="middle">11:34</text>
<text x="1059.5" y="808" text-anchor="middle">11:44</text>
<text x="1113.5" y="808" text-anchor="middle">11:54</text>
<text x="1167.5" y="808" text-anchor="middle">12:00</text>
<text x="1221.5" y="808" text-anchor="middle">12:01</text>
<text x="1275.5" y="808" text-anchor="middle">12:05</text>
<text x="1329.5" y="808" text-anchor="middle">12:13</text>
<text x="1383.5" y="808" text-anchor="middle">12:23</text>
<text x="1437.5" y="808" text-anchor="middle">12:26</text>
<text x="10.5" y="789" font-size="11.2px" textLength="124" lengthAdjust="spacing">© 2014 NinjaTrader, LLC</text>
<text x="1477.5" y="787.5" text-anchor="end" fill="#1c1c1c" font-size="11.2px" textLength="124" lengthAdjust="spacing">::DBVolumeIndicatorBar::</text>
</g>
<g>
<polygon points="1484.2,118.0 1490.5,111.5 1526.5,111.5 1526.5,124.5 1490.5,124.5" fill="#ff4500" stroke="#000" stroke-width="1"/><text x="1492.6" y="122.0" fill="#fff">1,3665</text>
<polygon points="1484.2,179.0 1490.5,172.5 1526.5,172.5 1526.5,185.5 1490.5,185.5" fill="#ff8c00" stroke="#000" stroke-width="1"/><text x="1492.6" y="183.0" fill="#000">1,3646</text>
<polygon points="1484.2,196.0 1490.5,189.5 1526.5,189.5 1526.5,202.5 1490.5,202.5" fill="#dcdcdc" stroke="#000" stroke-width="1"/><text x="1492.6" y="200.0" fill="#000">1,3641</text>
<polygon points="1484.2,228.0 1490.5,221.5 1526.5,221.5 1526.5,234.5 1490.5,234.5" fill="#dcdcdc" stroke="#000" stroke-width="1"/><text x="1492.6" y="232.0" fill="#000">1,3631</text>
<polygon points="1484.2,240.0 1490.5,233.5 1526.5,233.5 1526.5,246.5 1490.5,246.5" fill="#daa520" stroke="#000" stroke-width="1"/><text x="1492.6" y="244.0" fill="#000">1,3627</text>
<polygon points="1484.2,260.0 1490.5,253.5 1526.5,253.5 1526.5,266.5 1490.5,266.5" fill="#dcdcdc" stroke="#000" stroke-width="1"/><text x="1492.6" y="264.0" fill="#000">1,3621</text>
<polygon points="1484.2,291.0 1490.5,284.5 1526.5,284.5 1526.5,297.5 1490.5,297.5" fill="#00ff00" stroke="#000" stroke-width="1"/><text x="1492.6" y="295.0" fill="#000">1,3611</text>
<polygon points="1484.2,281.0 1490.5,274.5 1526.5,274.5 1526.5,287.5 1490.5,287.5" fill="#000" stroke="#000" stroke-width="1"/><text x="1492.6" y="285.0" fill="#fff">1,3615</text>
<polygon points="1484.2,300.0 1490.5,293.5 1526.5,293.5 1526.5,306.5 1490.5,306.5" fill="#ffd700" stroke="#000" stroke-width="1"/><text x="1492.6" y="304.0" fill="#000">1,3609</text>
<polygon points="1484.2,324.0 1490.5,317.5 1526.5,317.5 1526.5,330.5 1490.5,330.5" fill="#dcdcdc" stroke="#000" stroke-width="1"/><text x="1492.6" y="328.0" fill="#000">1,3601</text>
<polygon points="1484.2,356.0 1490.5,349.5 1526.5,349.5 1526.5,362.5 1490.5,362.5" fill="#dcdcdc" stroke="#000" stroke-width="1"/><text x="1492.6" y="360.0" fill="#000">1,3592</text>
<polygon points="1484.2,361.0 1490.5,354.5 1526.5,354.5 1526.5,367.5 1490.5,367.5" fill="#daa520" stroke="#000" stroke-width="1"/><text x="1492.6" y="365.0" fill="#000">1,3590</text>
<polygon points="1484.2,388.0 1490.5,381.5 1526.5,381.5 1526.5,394.5 1490.5,394.5" fill="#dcdcdc" stroke="#000" stroke-width="1"/><text x="1492.6" y="392.0" fill="#000">1,3582</text>
<polygon points="1484.2,422.0 1490.5,415.5 1526.5,415.5 1526.5,428.5 1490.5,428.5" fill="#ff8c00" stroke="#000" stroke-width="1"/><text x="1492.6" y="426.0" fill="#000">1,3571</text>
<polygon points="1484.2,482.0 1490.5,475.5 1526.5,475.5 1526.5,488.5 1490.5,488.5" fill="#ff4500" stroke="#000" stroke-width="1"/><text x="1492.6" y="486.0" fill="#fff">1,3553</text>
<polygon points="1484.2,634.0 1490.5,627.5 1520.5,627.5 1520.5,640.5 1490.5,640.5" fill="#0000ff" stroke="#000" stroke-width="1"/><text x="1492.6" y="638.0" fill="#fff">0,213</text>
<polygon points="1484.2,676.0 1490.5,669.5 1516.5,669.5 1516.5,682.5 1490.5,682.5" fill="#ffd700" stroke="#000" stroke-width="1"/><text x="1492.6" y="680.0" fill="#000">2479</text>
<polygon points="1484.2,696.0 1490.5,689.5 1534.5,689.5 1534.5,702.5 1490.5,702.5" fill="#ffd700" stroke="#000" stroke-width="1"/><text x="1492.6" y="700.0" fill="#000">1952,95</text>
<polygon points="1484.2,742.0 1490.5,735.5 1520.5,735.5 1520.5,748.5 1490.5,748.5" fill="#00ffff" stroke="#000" stroke-width="1"/><text x="1492.6" y="746.0" fill="#000">725,5</text>
<polygon points="1484.2,789.0 1490.5,782.5 1529.5,782.5 1529.5,795.5 1490.5,795.5" fill="#ffd700" stroke="#000" stroke-width="1"/><text x="1492.6" y="793.0" fill="#000">-501,95</text>
</g>
</svg>
<div class="abs" style="left:7px;top:30px;width:1531px;height:1px;background:#dcdcdc"></div><div id="tb" class="abs"></div>
<div class="abs" style="left:11px;top:35px;width:2px;height:14px;background:repeating-linear-gradient(#b2b2b2 0 2px,transparent 2px 4px)"></div>
<div class="abs sep" style="left:20px"></div>
<div class="abs tbt" style="left:28px;letter-spacing:-0.55px">6E 03-14</div><div class="abs dd" style="left:77px"></div>
<div class="abs tbt" style="left:92px;letter-spacing:-0.25px">150 Tick</div><div class="abs dd" style="left:140px"></div>
<div class="abs sep" style="left:153px"></div>
<div class="abs dd" style="left:175.5px"></div>
<div class="abs dd" style="left:204.5px"></div>
<div class="abs sep" style="left:263px"></div>
<div class="abs dd" style="left:285.5px"></div>
<div class="abs sep" style="left:321px"></div>
<svg class="abs" style="left:0;top:30px" width="460" height="26" viewBox="0 30 460 26">
<defs><linearGradient id="gg" x1="0" x2="1"><stop offset="0" stop-color="#35c010"/><stop offset="0.45" stop-color="#a8ff7a"/><stop offset="1" stop-color="#35c010"/></linearGradient><linearGradient id="gr" x1="0" x2="1"><stop offset="0" stop-color="#e02010"/><stop offset="0.45" stop-color="#ff9c8c"/><stop offset="1" stop-color="#e02010"/></linearGradient><linearGradient id="gb" x1="0" x2="0" y1="0" y2="1"><stop offset="0" stop-color="#fff"/><stop offset="0.5" stop-color="#e4e4e4"/><stop offset="1" stop-color="#a4a4a4"/></linearGradient><radialGradient id="lens" cx="0.4" cy="0.4" r="0.7"><stop offset="0" stop-color="#b9dcf7"/><stop offset="1" stop-color="#7db4e6"/></radialGradient></defs>
<line x1="160.8" x2="160.8" y1="36.6" y2="50.0" stroke="#111" stroke-width="2" stroke-linecap="round"/>
<rect x="158.9" y="37.8" width="3.9" height="10.6" rx="1.2" fill="url(#gg)"/>
<line x1="165.8" x2="165.8" y1="35.9" y2="49.2" stroke="#111" stroke-width="2" stroke-linecap="round"/>
<rect x="163.9" y="37.1" width="3.9" height="10.6" rx="1.2" fill="url(#gg)"/>
<line x1="170.9" x2="170.9" y1="36.6" y2="50.0" stroke="#111" stroke-width="2" stroke-linecap="round"/>
<rect x="169.0" y="37.8" width="3.9" height="10.6" rx="1.2" fill="url(#gr)"/>
<g transform="translate(187.7,49.9) rotate(-43)"><polygon points="0,0 4.2,-2 4.2,2" fill="#d8b48c" stroke="#8a7a5c" stroke-width="0.5"/><polygon points="0,0 1.5,-0.7 1.5,0.7" fill="#444"/><rect x="4.2" y="-2" width="11.6" height="4" fill="#ffd91a" stroke="#b89a10" stroke-width="0.6"/><rect x="4.2" y="-0.7" width="11.6" height="1.2" fill="#ffef7a"/><rect x="15.8" y="-2" width="3" height="4" rx="0.8" fill="#ee5a5a" stroke="#b03a3a" stroke-width="0.5"/></g>
<g><line x1="217.5" y1="50" x2="221" y2="46.6" stroke="#3c3c3c" stroke-width="2.2" stroke-linecap="round"/><circle cx="223.8" cy="43.8" r="4.3" fill="url(#lens)" stroke="#a9adb3" stroke-width="1.6"/><path d="M227.3 38.8h5.8M230.2 35.9v5.8" stroke="#0aa020" stroke-width="2.1"/></g>
<g><line x1="240.5" y1="50" x2="244" y2="46.6" stroke="#b0b0b0" stroke-width="2.2" stroke-linecap="round"/><circle cx="247" cy="43.8" r="4.3" fill="#cdcdcd" stroke="#c4c4c4" stroke-width="1.6"/><path d="M250.3 38.8h5.6" stroke="#bdbdbd" stroke-width="1.8"/></g>
<g transform="translate(269.4,37.3) rotate(-45)"><path d="M0 0 L-4.6 7.6 L-1.5 6.6 L-1.5 15.6 L1.5 15.6 L1.5 6.6 L4.6 7.6 Z" fill="#fff" stroke="#3a3a3a" stroke-width="0.9" stroke-linejoin="round"/></g>
<g><rect x="299.9" y="35.9" width="12.6" height="14.3" rx="1" fill="#fff" stroke="#757575" stroke-width="1.1"/><line x1="299.2" y1="50.1" x2="302.6" y2="46.7" stroke="#3c3c3c" stroke-width="2.2" stroke-linecap="round"/><circle cx="305.4" cy="43.8" r="4" fill="url(#lens)" stroke="#b4b8be" stroke-width="1.4"/></g>
<g><path d="M333 37.5h10M330 41h13M333 44.7h10M330 48.4h13" stroke="#d2d2d2" stroke-width="1"/><path d="M327.3 35.7h5.6l2 1.4l-2 1.4h-5.6z" fill="#35d010" stroke="#2aa80c" stroke-width="0.5"/><path d="M327.3 43.3h5.6l2 1.4l-2 1.4h-5.6z" fill="#f02a1a" stroke="#c01a10" stroke-width="0.5"/><rect x="336" y="37.6" width="2.9" height="13.4" rx="1" fill="url(#gg)"/><rect x="339.6" y="45.2" width="2.4" height="5.8" rx="0.8" fill="url(#gr)"/><circle cx="337.4" cy="37.4" r="0.8" fill="#111"/><circle cx="340.8" cy="45" r="0.7" fill="#111"/></g>
<g><rect x="350.8" y="35.9" width="14.4" height="14.3" rx="1.2" fill="#ececec" stroke="#7d7d7d" stroke-width="1.1"/><path d="M351.5 39.5h13M351.5 43h13M351.5 46.5h13M355.6 36.5v13M360 36.5v13" stroke="#bcbcbc" stroke-width="0.7"/>
<line x1="353.4" x2="353.4" y1="38.4" y2="48.8" stroke="#111" stroke-width="1.6" stroke-linecap="round"/><rect x="352.0" y="39.2" width="2.9" height="8.8" rx="0.9" fill="url(#gg)"/>
<line x1="357.8" x2="357.8" y1="36.6" y2="46.0" stroke="#111" stroke-width="1.6" stroke-linecap="round"/><rect x="356.4" y="37.4" width="2.9" height="7.8" rx="0.9" fill="url(#gg)"/>
<line x1="362.2" x2="362.2" y1="39.5" y2="48.8" stroke="#111" stroke-width="1.6" stroke-linecap="round"/><rect x="360.8" y="40.3" width="2.9" height="7.7" rx="0.9" fill="url(#gr)"/>
</g>
<g><rect x="373.8" y="35.9" width="14.5" height="14.3" rx="1.2" fill="url(#gb)" stroke="#7d7d7d" stroke-width="1.1"/><polyline points="374.6,43 376.3,38.6 377.8,40.8 381.8,37.2 383.6,38 386.6,40.6" fill="none" stroke="#2fb070" stroke-width="1.1"/><polyline points="375.4,44.4 376.6,45.6 380.4,42.2 381.6,43.4 384.4,43 387,45.4" fill="none" stroke="#e8303a" stroke-width="1.1"/></g>
<g><path d="M398.6 36.6h7.6l3.3 3.3v9.6h-10.9z" fill="#fff" stroke="#7a7a7a" stroke-width="1.1" stroke-linejoin="round"/><path d="M406.2 36.6v3.3h3.3" fill="#eee" stroke="#8a8a8a" stroke-width="0.8"/><text x="403.6" y="46.8" text-anchor="middle" font-family="'Liberation Sans',sans-serif" font-weight="bold" font-size="10.5px" fill="#1e8c1e">$</text></g>
<g><rect x="420.7" y="35.9" width="12.8" height="14.3" rx="1" fill="#f7f7fd" stroke="#85858f" stroke-width="1.1"/><rect x="422.1" y="37.1" width="10" height="2.8" rx="0.6" fill="#3f9bd8"/><rect x="422.1" y="41.2" width="2.8" height="7.8" rx="0.6" fill="#a04cf5"/><rect x="423.1" y="42" width="0.8" height="6.2" fill="#d9c2fb"/><path d="M426.2 41.8h5.6M426.2 43.8h5.6M426.2 45.8h5.6M426.2 47.8h5.6" stroke="#d4d8ec" stroke-width="0.9"/></g>
</svg>
<div id="sb" class="abs"></div>
<div class="abs" style="left:7px;top:842px;width:1531px;height:1px;background:#dedede"></div>
<div class="abs" style="left:7px;top:31px;width:1px;height:812px;background:#dedede"></div>
<div class="abs" style="left:1537px;top:31px;width:1px;height:812px;background:#f4f4f4"></div>
<div class="abs thumb" style="left:1460px;top:819px;width:60px;height:22px"></div>
<svg class="abs" style="left:12px;top:824px" width="10" height="12" viewBox="0 0 10 12"><path d="M6.6 2.2L2.6 6L6.6 9.8" fill="none" stroke="#555" stroke-width="1.9"/></svg>
<svg class="abs" style="left:1523px;top:824px" width="10" height="12" viewBox="0 0 10 12"><path d="M3.4 2.2L7.4 6L3.4 9.8" fill="none" stroke="#555" stroke-width="1.9"/></svg>
<div id="dlg" class="abs">
<div id="dtitle" class="abs">Indicators</div>
<div id="dclose" class="abs"><svg width="19" height="19" viewBox="0 0 19 19" style="display:block"><path d="M7 7.6l4.8 4.8M11.8 7.6l-4.8 4.8" stroke="#fff" stroke-width="2"/></svg></div>
<div id="client" class="abs">
<div class="abs" style="left:0px;top:0px;width:684px;height:1px;background:#a3a6ad"></div>
<div class="abs" style="left:1px;top:1px;width:682px;height:2px;background:#6b6d72"></div>
<div class="abs" style="left:0px;top:0px;width:1px;height:452px;background:#a3a6ad"></div>
<div class="abs" style="left:1px;top:1px;width:2px;height:450px;background:#6b6d72"></div>
<div class="abs" style="left:0px;top:451px;width:335px;height:1px;background:#fff"></div>
<div class="abs" style="left:333px;top:3px;width:1px;height:448px;background:#9a9a9a"></div>
<div class="abs" style="left:334px;top:1px;width:1px;height:451px;background:#fff"></div>
<div class="abs" style="left:3px;top:3px;width:330px;height:262px;background:#fff;overflow:hidden"><div class="li" style="top:2px">DBBarProfile</div><div class="li" style="top:15px">DBBuySell</div><div class="li" style="top:28px">DBDeltaBalance</div><div class="li" style="top:41px">DBDeltaBuySell</div><div class="li" style="top:54px">DBDeltaDOM</div><div class="li" style="top:67px">DBDeltaIndicatorBar</div><div class="li" style="top:80px">DBDeltaIndicatorLin</div><div class="li" style="top:93px">DBDeltaSignal</div><div class="li" style="top:106px">DBDeltaSpeedBuySell</div><div class="li" style="top:119px">DBDeltaSpeedDiff</div><div class="li" style="top:132px">DBDeltaSpeedTotal</div><div class="li" style="top:145px">DBDStoch</div><div class="li" style="top:158px">DBIceberg</div><div class="li" style="top:171px">DBInsideView</div><div class="li" style="top:184px">DBLivelli</div><div class="li" style="top:197px">DBVolumeForce</div><div class="li" style="top:210px">DBVolumeIndicatorBar</div><div class="li" style="top:223px">DBVolumeProfile</div><div class="li" style="top:236px">DBVWAP</div><div class="li" style="top:249px">DBVWAPCustom</div></div>
<div class="abs" style="left:3px;top:265px;width:330px;height:1px;background:#a0a0a0"></div>
<div class="abs" style="left:316px;top:3px;width:17px;height:262px;background:#f0f0f0"></div>
<div class="abs" style="left:316px;top:21px;width:15px;height:33px;background:#cdcdcd"></div>
<svg class="abs" style="left:318px;top:9px" width="11" height="8" viewBox="0 0 11 8"><path d="M1.5 6 L5.5 2 L9.5 6" fill="none" stroke="#5a5a5a" stroke-width="2"/></svg>
<svg class="abs" style="left:318px;top:252px" width="11" height="8" viewBox="0 0 11 8"><path d="M1.5 2 L5.5 6 L9.5 2" fill="none" stroke="#5a5a5a" stroke-width="2"/></svg>
<div class="abs" style="left:3px;top:270px;width:331px;height:134px;background:#fff;box-sizing:border-box;border:1px solid #6d6d6d;border-left:none;overflow:hidden"><div class="abs" style="left:1px;top:1px;width:328px;height:13px;background:#3399ff"></div><div class="li" style="top:1.2px;left:3px;color:#fff">DBVolumeForce</div><div class="li" style="top:14.2px;left:3px;">DBVolumeIndicatorBar</div><div class="li" style="top:27.2px;left:3px;">DBVolumeProfile</div><div class="li" style="top:40.2px;left:3px;">DBVWAP</div><div class="li" style="top:53.2px;left:3px;">DBVWAPCustom</div></div>
<div class="abs btn" style="left:27px;top:421px;width:66px;height:23px;color:#9b9b9b;background:#efefef;border-color:#d5d5d5">New</div>
<div class="abs btn" style="left:241px;top:421px;width:66px;height:23px;">Remove</div>
<div class="abs" style="left:342px;top:1px;width:1px;height:387px;background:#6b6d72"></div>
<div class="abs" style="left:682px;top:1px;width:1px;height:388px;background:#e3e3e3"></div>
<div class="abs" style="left:683px;top:0px;width:1px;height:389px;background:#fff"></div>
<div class="abs" style="left:342px;top:387px;width:341px;height:1px;background:#e3e3e3"></div>
<div class="abs" style="left:342px;top:388px;width:342px;height:1px;background:#fff"></div>
<div class="abs" style="left:343px;top:3px;width:339px;height:384px;background:#c8c8c8;overflow:hidden"><div class="row" style="top:1px"><div class="box"><i></i></div><div class="cat">Parameters</div></div><div class="row" style="top:17px"><div class="lab" style="">Ignora barre indefinite</div><div class="val" style="">True</div></div><div class="row" style="top:33px"><div class="lab" style="">NrBarre</div><div class="val" style="">20</div></div><div class="row" style="top:49px"><div class="lab" style="">NrSmooting</div><div class="val" style="">3</div></div><div class="row" style="top:65px"><div class="lab" style="">Tipo range</div><div class="val" style="">Range_Barra</div></div><div class="row" style="top:81px"><div class="box"><i></i></div><div class="cat">Data</div></div><div class="row" style="top:97px"><div class="lab" style="">Calculate on bar close</div><div class="val" style="">True</div></div><div class="row" style="top:113px"><div class="lab" style="">Input series</div><div class="val" style="letter-spacing:0.7px;">6E 03-14 (150 Tick)</div></div><div class="row" style="top:129px"><div class="lab" style="">Maximum bars look back</div><div class="val" style="">TwoHundredFiftySix</div></div><div class="row" style="top:145px"><div class="box"><i></i></div><div class="cat">Visual</div></div><div class="row" style="top:161px"><div class="lab" style="color:#7f7f7f">Auto scale</div><div class="val" style="color:#7f7f7f">True</div></div><div class="row" style="top:177px"><div class="lab" style="">Displacement</div><div class="val" style="">0</div></div><div class="row" style="top:193px"><div class="lab" style="">Display in Data Box</div><div class="val" style="">True</div></div><div class="row" style="top:209px"><div class="lab" style="background:#c8c8c8">Label</div><div class="val" style="text-indent:8px">DBVolumeForce</div></div><div class="row" style="top:225px"><div class="lab" style="">Panel</div><div class="val" style="">2</div></div><div class="row" style="top:241px"><div class="lab" style="">Price marker(s)</div><div class="val" style="">True</div></div><div class="row" style="top:257px"><div class="lab" style="">Scale justification</div><div class="val" style="">Right</div></div><div class="row" style="top:273px"><div class="box"><i></i></div><div class="cat">Display Colors</div></div><div class="row" style="top:289px"><div class="lab" style="">Buy Pressure</div><div class="val" style="text-indent:29px"><div class="sw" style="background:#ff00ff"></div>Fuchsia</div></div><div class="row" style="top:305px"><div class="lab" style="">Sell Pressure</div><div class="val" style="text-indent:29px"><div class="sw" style="background:#0000ff"></div>Blue</div></div><div class="row" style="top:321px"><div class="box"><i></i></div><div class="cat">Lines</div></div><div class="row" style="top:337px"><div class="box"><i></i><b></b></div><div class="lab" style="">ZeroLine</div><div class="val" style="text-indent:29px"><div class="sw" style="background:#fff"><div style="position:absolute;left:0;top:5px;width:18px;height:1px;background:#808080"></div></div>0</div></div><div class="row" style="top:353px"><div class="box"><i></i></div><div class="cat">Plots</div></div><div class="row" style="top:369px"><div class="box"><i></i><b></b></div><div class="lab" style="">ForceV</div><div class="val" style="text-indent:29px"><div class="sw" style="background:#fff"></div>Line; Solid; 1px</div></div></div>
<div class="abs" style="left:664px;top:3px;width:18px;height:384px;background:#f0f0f0"></div>
<div class="abs" style="left:665px;top:20px;width:15px;height:337px;background:#cdcdcd"></div>
<svg class="abs" style="left:667px;top:8px" width="11" height="8" viewBox="0 0 11 8"><path d="M1.5 6 L5.5 2 L9.5 6" fill="none" stroke="#5a5a5a" stroke-width="2"/></svg>
<svg class="abs" style="left:667px;top:375px" width="11" height="8" viewBox="0 0 11 8"><path d="M1.5 2 L5.5 6 L9.5 2" fill="none" stroke="#5a5a5a" stroke-width="2"/></svg>
<div class="abs" style="left:342px;top:392px;width:341px;height:59px;box-sizing:border-box;border:1px solid #8c8c8c;background:#f0f0f0"><div class="abs" style="left:4px;top:2px;font-weight:bold;line-height:14px;letter-spacing:0.3px">Label</div><div class="abs" style="left:4px;top:17px;line-height:14px;white-space:pre;letter-spacing:0.08px">Forza realtiva del Volume</div></div>
<div class="abs btn" style="left:89px;top:482px;width:79px;height:23px;border-color:#3399ff">OK</div>
<div class="abs btn" style="left:303px;top:482px;width:78px;height:23px;">Apply</div>
<div class="abs btn" style="left:517px;top:482px;width:78px;height:23px;">Close</div>
<svg class="abs" style="left:671px;top:507px" width="12" height="12" viewBox="0 0 12 12"><g fill="#bfbfbf"><rect x="9" y="1" width="2" height="2"/><rect x="6" y="4" width="2" height="2"/><rect x="9" y="4" width="2" height="2"/><rect x="3" y="7" width="2" height="2"/><rect x="6" y="7" width="2" height="2"/><rect x="9" y="7" width="2" height="2"/></g></svg>
</div></div>
</body></html>
